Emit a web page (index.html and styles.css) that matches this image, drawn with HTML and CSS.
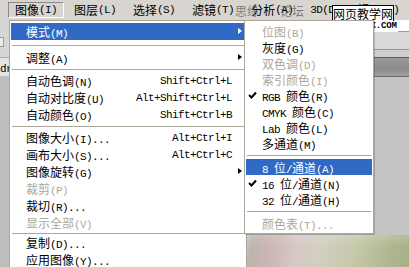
FILE: index.html
```html
<!DOCTYPE html>
<html lang="zh-CN">
<head>
    <meta charset="UTF-8">
    <title>图像 - 模式</title>
    <link rel="stylesheet" href="styles.css">
</head>
<body>
  <div class="screen">
    <div class="menubar">
      <span class="top on">图像<span class="k">(I)</span></span>
      <span class="top">图层<span class="k">(L)</span></span>
      <span class="top">选择<span class="k">(S)</span></span>
      <span class="top">滤镜<span class="k">(T)</span></span>
      <span class="top">分析<span class="k">(A)</span></span>
      <span class="top"><span class="k">3D(D)</span></span>
      <span class="top">视图<span class="k">(V)</span></span>
    </div>

    <div class="work">
      <div class="dock">
        <div class="dock-tool"><span class="dock-box"></span></div>
        <div class="dock-tab"><span class="k">dr</span></div>
        <div class="dock-rest"></div>
      </div>
      <div class="canvas">
        <div class="panel">
          <div class="panel-white"></div>
          <div class="panel-field"></div>
          <div class="panel-gap"></div>
          <div class="panel-bar"></div>
          <div class="panel-rest"></div>
        </div>
        <div class="photo"></div>
      </div>
    </div>

    <!-- watermark over the menu bar -->
    <span class="mark-sy">思缘<span class="mark-gap"></span>论坛</span>
    <span class="mark-box">网页教学网</span>
    <span class="mark-url">WWW.WEBJX.COM</span>

    <ul class="menu main">
      <li class="item hot"><span class="label">模式<span class="k">(M)</span></span><span class="arrow"></span></li>
      <li class="sep wide"></li>
      <li class="item"><span class="label">调整<span class="k">(A)</span></span><span class="arrow"></span></li>
      <li class="sep"></li>
      <li class="item"><span class="label">自动色调<span class="k">(N)</span></span><span class="key">Shift+Ctrl+L</span><span class="arrow none"></span></li>
      <li class="item"><span class="label">自动对比度<span class="k">(U)</span></span><span class="key">Alt+Shift+Ctrl+L</span><span class="arrow none"></span></li>
      <li class="item"><span class="label">自动颜色<span class="k">(O)</span></span><span class="key">Shift+Ctrl+B</span><span class="arrow none"></span></li>
      <li class="sep"></li>
      <li class="item"><span class="label">图像大小<span class="k">(I)...</span></span><span class="key">Alt+Ctrl+I</span><span class="arrow none"></span></li>
      <li class="item"><span class="label">画布大小<span class="k">(S)...</span></span><span class="key">Alt+Ctrl+C</span><span class="arrow none"></span></li>
      <li class="item"><span class="label">图像旋转<span class="k">(G)</span></span><span class="arrow"></span></li>
      <li class="item off"><span class="label">裁剪<span class="k">(P)</span></span></li>
      <li class="item"><span class="label">裁切<span class="k">(R)...</span></span></li>
      <li class="item off"><span class="label">显示全部<span class="k">(V)</span></span></li>
      <li class="sep thin"></li>
      <li class="item"><span class="label">复制<span class="k">(D)...</span></span></li>
      <li class="item"><span class="label">应用图像<span class="k">(Y)...</span></span></li>
    </ul>

    <ul class="menu sub">
      <li class="item off"><span class="check"></span><span class="label">位图<span class="k">(B)</span></span></li>
      <li class="item"><span class="check"></span><span class="label">灰度<span class="k">(G)</span></span></li>
      <li class="item off"><span class="check"></span><span class="label">双色调<span class="k">(D)</span></span></li>
      <li class="item off"><span class="check"></span><span class="label">索引颜色<span class="k">(I)</span></span></li>
      <li class="item"><span class="check"><svg width="9" height="8" viewBox="0 0 9 8"><polyline points="1,4 3.5,6.5 8,1.5" fill="none" stroke="#000" stroke-width="2"/></svg></span><span class="label"><span class="k">RGB </span>颜色<span class="k">(R)</span></span></li>
      <li class="item"><span class="check"></span><span class="label"><span class="k">CMYK </span>颜色<span class="k">(C)</span></span></li>
      <li class="item"><span class="check"></span><span class="label"><span class="k">Lab </span>颜色<span class="k">(L)</span></span></li>
      <li class="item"><span class="check"></span><span class="label">多通道<span class="k">(M)</span></span></li>
      <li class="sep"></li>
      <li class="item hot"><span class="check"></span><span class="label"><span class="k">8 </span>位<span class="k">/</span>通道<span class="k">(A)</span></span></li>
      <li class="item"><span class="check"><svg width="9" height="8" viewBox="0 0 9 8"><polyline points="1,4 3.5,6.5 8,1.5" fill="none" stroke="#000" stroke-width="2"/></svg></span><span class="label"><span class="k">16 </span>位<span class="k">/</span>通道<span class="k">(N)</span></span></li>
      <li class="item"><span class="check"></span><span class="label"><span class="k">32 </span>位<span class="k">/</span>通道<span class="k">(H)</span></span></li>
      <li class="sep"></li>
      <li class="item off"><span class="check"></span><span class="label">颜色表<span class="k">(T)...</span></span></li>
    </ul>
  </div>
</body>
</html>
```

FILE: styles.css
```css
body {
  margin: 0;
  background: #c0c0c0;
  font: 12px "Noto Sans CJK SC", sans-serif;
  color: #000;
}
.screen {
  position: relative;
  width: 409px;
  height: 267px;
  overflow: hidden;
  display: flex;
  flex-direction: column;
}
.k {
  font: 11px "Liberation Mono", monospace;
  letter-spacing: -0.6px;
}

/* menu bar */
.menubar {
  height: 20px;
  flex: none;
  display: flex;
  align-items: center;
  gap: 3px;
  padding-left: 8px;
  background: #d8d5d0;
  white-space: nowrap;
}
.top {
  height: 16px;
  line-height: 16px;
  padding: 0 6px;
  border: 1px solid transparent;
  box-sizing: border-box;
  display: flex;
  align-items: center;
}
.top.on {
  border-color: #8a8a8a #ffffff #ffffff #8a8a8a;
}

/* stuff behind the menus */
.work {
  flex: 1;
  display: flex;
}
.dock {
  width: 9px;
  display: flex;
  flex-direction: column;
  background: #bdbdbd;
}
.dock-tool {
  height: 37px;
  background: #d6d6d6;
  padding-top: 17px;
  box-sizing: border-box;
}
.dock-box {
  display: block;
  width: 3px;
  height: 8px;
  border: 1px solid #9a9a9a;
  border-left: none;
  background: #ececec;
}
.dock-tab {
  height: 18px;
  background: #e4e4e4;
  border-top: 1px solid #a8a8a8;
  overflow: hidden;
  line-height: 17px;
}
.dock-rest {
  flex: 1;
}
.canvas {
  flex: 1;
  display: flex;
  flex-direction: column;
}
.panel {
  height: 215px;
  display: flex;
  flex-direction: column;
  align-items: flex-end;
  background: #c3c3c3;
}
.panel > div {
  width: 36px;
}
.panel-white {
  height: 11px;
  background: #fff;
}
.panel-field {
  height: 19px;
  box-sizing: border-box;
  border: 1px solid #7f9db9;
  border-right: none;
  background: #d9d9d9;
}
.panel-gap {
  height: 7px;
  background: #cfcfcf;
}
.panel-bar {
  height: 20px;
  box-sizing: border-box;
  border-top: 1px solid #5a5a5a;
  border-bottom: 1px solid #6a6a6a;
  background: linear-gradient(#9a9a9a, #8a8a8a 60%, #a2a2a2);
}
.panel-rest {
  flex: 1;
  background: #c4c4c4;
}
.photo {
  flex: 1;
  background:
    linear-gradient(180deg, rgba(255,255,255,0.15), rgba(0,0,0,0) 40%),
    linear-gradient(100deg, #c0c0c0 0, #c0c0c0 237px, #bdb3ad 240px, #cdb6b4 262px, #d5c9c2 285px, #d2cfc2 310px, #c4c8a8 345px, #aeb690 380px, #a4ad86 409px);
}

/* watermark */
.mark-sy {
  position: absolute;
  left: 235px;
  top: 2px;
  font-size: 12px;
  color: rgba(40, 40, 40, 0.55);
  white-space: nowrap;
}
.mark-gap {
  display: inline-block;
  width: 21px;
}
.mark-box {
  position: absolute;
  left: 332px;
  top: 5px;
  height: 15px;
  line-height: 15px;
  border: 1px solid #000;
  background: #fff;
  font-size: 12px;
  white-space: nowrap;
}
.mark-url {
  position: absolute;
  left: 326px;
  top: 21px;
  padding: 0 2px;
  height: 11px;
  line-height: 11px;
  background: #fff;
  border-radius: 2px;
  font: bold 9px "Liberation Mono", monospace;
  letter-spacing: -0.1px;
}

/* menus */
.menu {
  position: absolute;
  top: 20px;
  margin: 0;
  padding: 2px 1px;
  list-style: none;
  background: #fff;
  border: 1px solid #aca899;
  white-space: nowrap;
}
.main {
  left: 9px;
  width: 234px;
}
.sub {
  left: 244px;
  width: 126px;
  box-shadow: 1px 1px 0 rgba(0, 0, 0, 0.18);
}
.item {
  display: flex;
  align-items: center;
  height: 17px;
}
.main .item {
  padding: 0 2px 0 15px;
}
.sub .item {
  height: 16px;
}
.label {
  flex: 1;
}
.key {
  font: 11px "Liberation Mono", monospace;
  letter-spacing: -0.6px;
}
.arrow {
  width: 11px;
  height: 7px;
  position: relative;
}
.arrow::after {
  content: "";
  position: absolute;
  left: 6px;
  top: 0;
  border-left: 4px solid #000;
  border-top: 3.5px solid transparent;
  border-bottom: 3.5px solid transparent;
}
.arrow.none::after {
  display: none;
}
.check {
  width: 16px;
  height: 8px;
  display: flex;
  align-items: center;
  padding-left: 2px;
  box-sizing: border-box;
}
.hot {
  background: #316ac5;
  color: #fff;
}
.hot .arrow::after {
  border-left-color: #fff;
}
.off {
  color: #aca899;
}
.sep {
  height: 6px;
  position: relative;
}
.sep.wide {
  height: 9px;
}
.sep.thin {
  height: 3px;
}
.sep::after {
  content: "";
  position: absolute;
  left: 1px;
  right: 1px;
  top: 50%;
  border-top: 1px solid #aca899;
}
.sub .sep {
  height: 8px;
}
```
